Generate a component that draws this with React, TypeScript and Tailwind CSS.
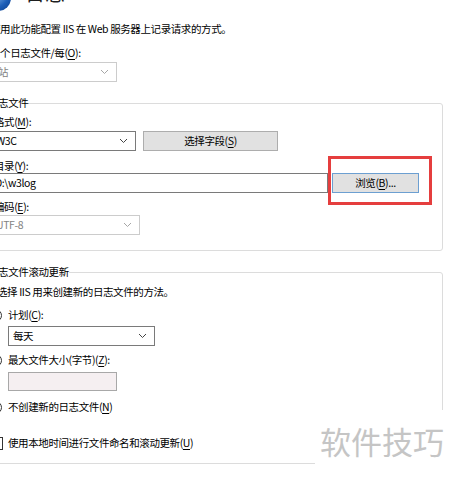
import React from "react";

function Chevron({ color }: { color: string }) {
  return (
    <svg width="9" height="6" viewBox="0 0 9 6" className="shrink-0">
      <polyline points="1,1 4.5,4.5 8,1" fill="none" stroke={color} strokeWidth="1" />
    </svg>
  );
}

function Select({ value, className, disabled }: { value: string; className: string; disabled?: boolean }) {
  return (
    <div
      className={`flex h-[20px] items-center justify-between border pl-[4px] pr-[7px] ${
        disabled ? "border-[#cccccc] text-[#838383]" : "border-[#7a7a7a] text-black"
      } ${className}`}
    >
      <span>{value}</span>
      <Chevron color={disabled ? "#a6a6a6" : "#444444"} />
    </div>
  );
}

function Key({ k }: { k: string }) {
  return <u className="underline-offset-2">{k}</u>;
}

function Radio({ children, className }: { children: React.ReactNode; className: string }) {
  return (
    <div className={`flex items-center gap-[6px] ${className}`}>
      <span className="h-[13px] w-[13px] rounded-full border border-[#333333] bg-white" />
      <span>{children}</span>
    </div>
  );
}

export default function App() {
  return (
    <div className="relative h-[477px] w-[450px] overflow-hidden bg-white font-['Noto_Sans_CJK_SC',sans-serif] text-[10.5px] leading-[14px] tracking-[-0.4px] text-black">
      <div className="-ml-[10px] flex flex-col">
        {/* header */}
        <div className="-mt-[15px] flex items-start">
          <span className="-ml-[5px] h-[26px] w-[26px] rounded-full bg-[radial-gradient(circle_at_35%_30%,#9cc8f2,#1d5fb8_60%,#0d3c86)]" />
          <span className="-mt-[2px] ml-[14px] text-[20px] leading-[20px] tracking-normal text-[#1f1f1f]">日志</span>
        </div>

        <p className="mt-[11px]">使用此功能配置 IIS 在 Web 服务器上记录请求的方式。</p>
        <p className="mt-[10px]">
          一个日志文件/每(<Key k="O" />):
        </p>
        <Select value="网站" disabled className="-ml-[7px] mt-[2px] w-[134px]" />

        {/* 日志文件 */}
        <fieldset className="-ml-[11px] mt-[13px] w-[464px] rounded-[3px] border border-[#dcdcdc] pb-[15px] pl-[8px]">
          <legend className="leading-[16px]">日志文件</legend>
          <div className="flex flex-col">
            <p className="ml-[6px] mt-[4px]">
              格式(<Key k="M" />):
            </p>
            <div className="ml-[3px] mt-[2px] flex gap-[7px]">
              <Select value="W3C" className="w-[145px]" />
              <button className="h-[20px] w-[135px] border border-[#adadad] bg-[#e1e1e1] leading-[14px]">
                选择字段(<Key k="S" />)
              </button>
            </div>
            <p className="ml-[6px] mt-[8px]">
              目录(<Key k="Y" />):
            </p>
            <div className="ml-[3px] flex gap-[4px]">
              <div className="flex h-[20px] w-[337px] items-center border border-[#7a7a7a] pl-[3px]">D:\w3log</div>
              <button className="h-[20px] w-[87px] border border-[#6c9fd1] bg-[#e1e1e1] leading-[14px]">
                浏览(<Key k="B" />)...
              </button>
            </div>
            <p className="ml-[6px] mt-[7px]">
              编码(<Key k="E" />):
            </p>
            <Select value="UTF-8" disabled className="ml-[3px] mt-[1px] w-[149px]" />
          </div>
        </fieldset>

        {/* 日志文件滚动更新 */}
        <fieldset className="-ml-[11px] mt-[13px] w-[464px] rounded-[3px] border border-[#dcdcdc] pb-[13px] pl-[8px]">
          <legend className="leading-[16px]">日志文件滚动更新</legend>
          <div className="flex flex-col">
            <p className="ml-[9px] mt-[5px]">选择 IIS 用来创建新的日志文件的方法。</p>
            <Radio className="ml-[1px] mt-[9px]">
              计划(<Key k="C" />):
            </Radio>
            <Select value="每天" className="ml-[20px] mt-[4px] w-[147px]" />
            <Radio className="ml-[1px] mt-[7px]">
              最大文件大小(字节)(<Key k="Z" />):
            </Radio>
            <div className="ml-[20px] mt-[5px] h-[19px] w-[109px] border border-[#a8a8a8] bg-[#f5eff1]" />
            <Radio className="ml-[1px] mt-[9px]">
              不创建新的日志文件(<Key k="N" />)
            </Radio>
            <div className="ml-[2px] mt-[22px] flex items-center gap-[5px]">
              <span className="h-[13px] w-[13px] border border-[#333333] bg-white" />
              <span>
                使用本地时间进行文件命名和滚动更新(<Key k="U" />)
              </span>
            </div>
          </div>
        </fieldset>
      </div>

      {/* highlight annotation */}
      <div className="absolute left-[328px] top-[156px] h-[49px] w-[104px] border-[3px] border-[#e53e3e]" />

      {/* watermark */}
      <div className="absolute left-[315px] top-[410px] h-[67px] w-[135px] bg-white pl-[5px] pt-[15px] text-[31px] leading-[31px] tracking-normal text-[#c5c5c5]">
        软件技巧
      </div>
    </div>
  );
}
